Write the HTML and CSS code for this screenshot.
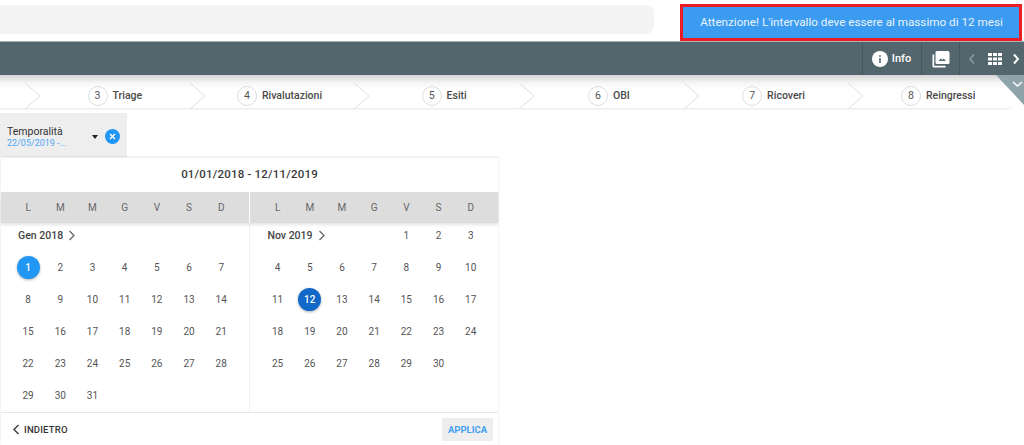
FILE: index.html
```html
<!DOCTYPE html>
<html lang="it">
<head>
<meta charset="utf-8">
<title>Temporalità</title>
<link rel="stylesheet" href="styles.css">
</head>
<body>
<header class="top"><div class="search"></div></header>
<div class="toast">Attenzione! L'intervallo deve essere al massimo di 12 mesi</div>
<nav class="toolbar">
  <div class="tool tool-info">
    <svg width="16" height="16" viewBox="0 0 16 16"><circle cx="8" cy="8" r="8" fill="#fff"/><rect x="7.2" y="7" width="1.6" height="5" fill="#53666e"/><rect x="7.2" y="4.2" width="1.6" height="1.6" fill="#53666e"/></svg>
    <span>Info</span>
  </div>
  <div class="tool tool-photo">
    <svg width="18" height="18" viewBox="0 0 18 18"><path d="M5 1h11a1.500 1.500 0 0 1 1.500 1.500v10a1.500 1.500 0 0 1-1.500 1.500H5a1.500 1.500 0 0 1-1.500-1.500v-10A1.500 1.500 0 0 1 5 1z" fill="#fff"/><path d="M0.500 4.500h1.700v11.300h11.300v1.700H2a1.500 1.500 0 0 1-1.500-1.500z" fill="#fff"/><path d="M6.500 11l2.300-2.500 1.500 1.500 1.400-1.500 2.300 2.500z" fill="#53666e"/></svg>
  </div>
  <div class="tool tool-nav">
    <svg width="8" height="12" viewBox="0 0 8 12"><path d="M6 1.500L2 6l4 4.500" fill="none" stroke="#8a9aa1" stroke-width="1.600"/></svg>
    <svg class="grid-icon" width="14" height="12" viewBox="0 0 14 12"><path d="M0 0h4v3H0zM5 0h4v3H5zM10 0h4v3h-4zM0 4.500h4v3H0zM5 4.500h4v3H5zM10 4.500h4v3h-4zM0 9h4v3H0zM5 9h4v3H5zM10 9h4v3h-4z" fill="#fff"/></svg>
    <svg width="8" height="12" viewBox="0 0 8 12"><path d="M2 1.500L6 6l-4 4.500" fill="none" stroke="#fff" stroke-width="2"/></svg>
  </div>
</nav>
<div class="steps-row">
  <ol class="steps">
    <li class="chev"><svg width="16" height="26" viewBox="0 0 16 26"><path d="M0 0l15 13L0 26" fill="none" stroke="#dedede"/></svg></li>
    <li class="step"><b>3</b>Triage</li>
    <li class="chev"><svg width="16" height="26" viewBox="0 0 16 26"><path d="M0 0l15 13L0 26" fill="none" stroke="#dedede"/></svg></li>
    <li class="step"><b>4</b>Rivalutazioni</li>
    <li class="chev"><svg width="16" height="26" viewBox="0 0 16 26"><path d="M0 0l15 13L0 26" fill="none" stroke="#dedede"/></svg></li>
    <li class="step"><b>5</b>Esiti</li>
    <li class="chev"><svg width="16" height="26" viewBox="0 0 16 26"><path d="M0 0l15 13L0 26" fill="none" stroke="#dedede"/></svg></li>
    <li class="step"><b>6</b>OBI</li>
    <li class="chev"><svg width="16" height="26" viewBox="0 0 16 26"><path d="M0 0l15 13L0 26" fill="none" stroke="#dedede"/></svg></li>
    <li class="step"><b>7</b>Ricoveri</li>
    <li class="chev"><svg width="16" height="26" viewBox="0 0 16 26"><path d="M0 0l15 13L0 26" fill="none" stroke="#dedede"/></svg></li>
    <li class="step"><b>8</b>Reingressi</li>
  </ol>
  <svg class="corner" width="28" height="30" viewBox="0 0 28 30"><path d="M0 0h28v30z" fill="#8fa3ab"/><path d="M17 7l4.500 4 4.500-4" fill="none" stroke="#fff" stroke-width="1.500"/></svg>
</div>
<div class="chip">
  <div class="chip-text"><span class="chip-title">Temporalità</span><span class="chip-value">22/05/2019 -...</span></div>
  <span class="caret"></span>
  <svg class="chip-close" width="15" height="15" viewBox="0 0 15 15"><circle cx="7.500" cy="7.500" r="7.500" fill="#2196f3"/><path d="M5 5l5 5M10 5l-5 5" stroke="#fff" stroke-width="1.400"/></svg>
</div>
<section class="panel">
  <h2 class="range">01/01/2018 - 12/11/2019</h2>
  <div class="weeks">
    <div class="week"><span>L</span><span>M</span><span>M</span><span>G</span><span>V</span><span>S</span><span>D</span></div>
    <div class="week"><span>L</span><span>M</span><span>M</span><span>G</span><span>V</span><span>S</span><span>D</span></div>
  </div>
  <div class="months">
    <div class="month">
      <div class="label wide">Gen 2018 <svg width="8" height="11" viewBox="0 0 8 11"><path d="M1.500 1l4.500 4.500L1.500 10" fill="none" stroke="#666" stroke-width="1.300"/></svg></div>
      <span class="day start">1</span><span class="day">2</span><span class="day">3</span><span class="day">4</span><span class="day">5</span><span class="day">6</span><span class="day">7</span>
      <span class="day">8</span><span class="day">9</span><span class="day">10</span><span class="day">11</span><span class="day">12</span><span class="day">13</span><span class="day">14</span>
      <span class="day">15</span><span class="day">16</span><span class="day">17</span><span class="day">18</span><span class="day">19</span><span class="day">20</span><span class="day">21</span>
      <span class="day">22</span><span class="day">23</span><span class="day">24</span><span class="day">25</span><span class="day">26</span><span class="day">27</span><span class="day">28</span>
      <span class="day">29</span><span class="day">30</span><span class="day">31</span>
    </div>
    <div class="month right">
      <div class="label four">Nov 2019 <svg width="8" height="11" viewBox="0 0 8 11"><path d="M1.500 1l4.500 4.500L1.500 10" fill="none" stroke="#666" stroke-width="1.300"/></svg></div>
      <span class="day first">1</span><span class="day first">2</span><span class="day first">3</span>
      <span class="day">4</span><span class="day">5</span><span class="day">6</span><span class="day">7</span><span class="day">8</span><span class="day">9</span><span class="day">10</span>
      <span class="day">11</span><span class="day end">12</span><span class="day">13</span><span class="day">14</span><span class="day">15</span><span class="day">16</span><span class="day">17</span>
      <span class="day">18</span><span class="day">19</span><span class="day">20</span><span class="day">21</span><span class="day">22</span><span class="day">23</span><span class="day">24</span>
      <span class="day">25</span><span class="day">26</span><span class="day">27</span><span class="day">28</span><span class="day">29</span><span class="day">30</span>
    </div>
  </div>
  <footer class="actions">
    <span class="back"><svg width="8" height="11" viewBox="0 0 8 11"><path d="M6.500 1L2 5.500 6.500 10" fill="none" stroke="#444" stroke-width="1.500"/></svg>INDIETRO</span>
    <span class="apply">APPLICA</span>
  </footer>
</section>
</body>
</html>
```
FILE: styles.css
```css
* { box-sizing: border-box; }
html, body { margin: 0; height: 445px; overflow: hidden; background: #fff; }
body { font-family: Roboto, "Liberation Sans", sans-serif; color: #333; position: relative; }

.top { height: 41px; padding-top: 5px; }
.search { width: 654px; height: 29px; background: #f4f4f4; border-radius: 0 8px 8px 0; }

.toast {
  position: absolute; left: 680px; top: 4px; width: 342px; height: 37px;
  border: 3px solid #ed1c24; background: #3a9bf0; color: #eaf4fd;
  font-size: 11.700px; font-weight: 400; line-height: 31px; text-align: center; padding-left: 1px;
}

.toolbar {
  height: 34px; background: #53666e; border-top: 1px solid #a9b4b9;
  display: flex; justify-content: flex-end; color: #fff;
}
.tool { display: flex; align-items: center; justify-content: center; border-left: 1px solid #46565d; }
.tool-info { width: 59px; gap: 4px; font-size: 11px; font-weight: 500; padding-right: 1px; }
.tool-photo { width: 38px; }
.tool-nav { width: 65px; justify-content: flex-start; padding-left: 8px; }
.grid-icon { margin: 0 10px 0 12px; }

.steps-row { height: 38px; position: relative; }
.steps {
  list-style: none; margin: 0; padding: 0 0 0 25px; width: 1013px; height: 34px;
  display: flex; align-items: center; background: linear-gradient(#d6d6d6, #f6f6f6 8px, #fff 14px);
  border-radius: 0 0 6px 0; border-bottom: 1px solid #eee;
  box-shadow: 0 1px 1px rgba(0,0,0,.04);
  font-size: 10.500px; font-weight: 500; color: #4a4a4a;
}
.chev { flex: none; width: 15px; height: 26px; margin-top: 8px; }
.step { flex: 1; display: flex; align-items: center; justify-content: center; gap: 5px; padding-top: 8px; }
.step b {
  width: 20px; height: 20px; border: 1px solid #ddd; border-radius: 50%;
  display: flex; align-items: center; justify-content: center; font-weight: 400; color: #555; background: #fff;
}
.corner { position: absolute; right: 0; top: 0; }

.chip {
  width: 127px; height: 44px; background: #eee; display: flex; align-items: center;
  padding: 3px 7px 0 7px;
}
.chip-text { flex: 1; display: flex; flex-direction: column; }
.chip-title { font-size: 10.500px; color: #333; line-height: 13px; }
.chip-value { font-size: 9px; color: #4ea6f5; line-height: 10px; }
.caret { width: 0; height: 0; border: 3.500px solid transparent; border-top: 4px solid #222; border-bottom: 0; margin-right: 7px; }

.panel {
  width: 497px; height: 288px; margin-left: 1px; background: #fff; border-top: 1px solid #eee;
  box-shadow: 0 0 2px rgba(0,0,0,.12); display: flex; flex-direction: column;
}
.range { margin: 0; height: 34px; font-size: 11.500px; font-weight: 500; line-height: 32px; text-align: center; letter-spacing: .2px; color: #3a3a3a; }
.weeks { display: flex; height: 31px; background: #ddd; box-shadow: 0 2px 3px rgba(0,0,0,.1); position: relative; }
.week { flex: 1; display: grid; grid-template-columns: repeat(7, 32.200px); align-items: center; justify-items: center; padding-left: 11px; font-size: 10px; color: #666; }
.week + .week { border-left: 1px solid #fff; padding-left: 12px; }

.months { flex: 1; display: flex; }
.month {
  flex: 1; display: grid; grid-template-columns: repeat(7, 32.200px); grid-template-rows: 28px;
  grid-auto-rows: 32.200px; align-items: center; justify-items: center; align-content: start; padding-left: 11px;
}
.month.right { border-left: 1px solid #f0f0f0; padding-left: 12px; }
.label { justify-self: start; font-size: 10.500px; font-weight: 500; color: #444; display: flex; align-items: center; gap: 5px; padding: 0 0 3px 6px; }
.label.wide { grid-column: span 7; }
.label.four { grid-column: span 4; }
.day { width: 23px; height: 23px; border-radius: 50%; font-size: 10px; color: #555; display: flex; align-items: center; justify-content: center; }
.day.first { margin-bottom: 4px; }
.day.start, .day.end { color: #fff; font-weight: 500; box-shadow: 0 1px 3px rgba(0,0,0,.3); }
.day.start { background: #2196f3; }
.day.end { background: #1168c8; }

.actions { height: 33px; border-top: 1px solid #e6e6e6; display: flex; align-items: center; justify-content: space-between; padding: 0 5px 0 11px; }
.back { display: flex; align-items: center; gap: 4px; font-size: 9.500px; font-weight: 500; color: #333; letter-spacing: .2px; }
.apply { width: 51px; height: 23px; background: #eee; color: #42a0f2; font-size: 9.500px; font-weight: 700; display: flex; align-items: center; justify-content: center; }
```
